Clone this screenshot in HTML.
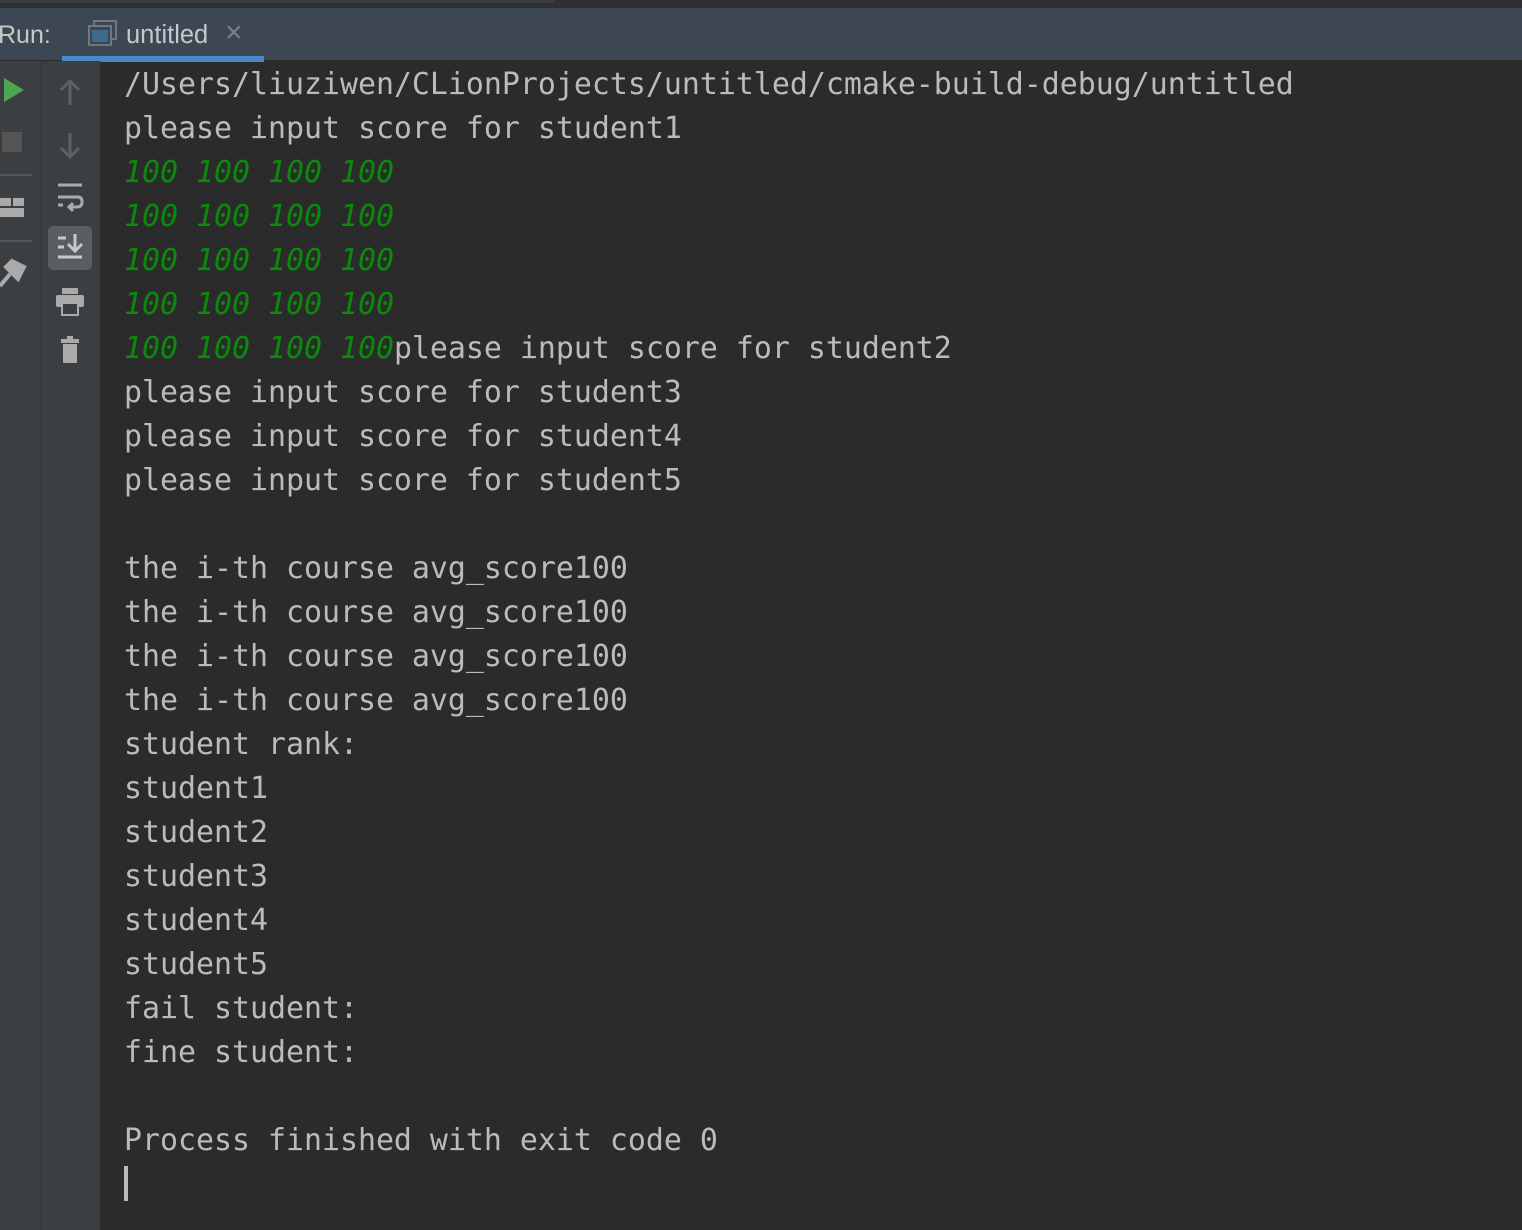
<!DOCTYPE html>
<html><head><style>
body{margin:0;width:1522px;height:1230px;overflow:hidden;background:#2b2b2b;position:relative;font-family:"Liberation Sans",sans-serif}
.top{position:absolute;left:0;top:0;width:1522px;height:8px;background:#2f3032}
.top i{position:absolute;left:0;top:0;width:555px;height:3px;background:#3c3f41}
.tabs{position:absolute;left:0;top:8px;width:1522px;height:52px;background:#3d4754;border-bottom:1px solid #2b2b2b}
.run{position:absolute;left:-2px;top:13px;color:#c8c8c8;font-size:25px}
.tab{position:absolute;left:126px;top:13px;color:#c8c8c8;font-size:25.5px}
.x{position:absolute;left:225px;top:10px;color:#7a8088;font-size:30px;line-height:30px}
.ul{position:absolute;left:62px;top:48px;width:202px;height:6px;background:#4a88c7}
.tb1{position:absolute;left:0;top:61px;width:41px;height:1169px;background:#3c3f41;border-right:1px solid #323232}
.tb2{position:absolute;left:42px;top:61px;width:58px;height:1169px;background:#3c3f41}
.out{position:absolute;left:124px;top:63px;font-family:"DejaVu Sans Mono","Liberation Mono",monospace;font-size:29.9px;line-height:44px;color:#bbbbbb;white-space:pre;margin:0}
.g{color:#0a8a0a;font-style:italic}
.cur{position:absolute;left:124px;top:1166px;width:4px;height:35px;background:#bbbbbb}
</style></head><body>
<div class="top"><i></i></div>
<div class="tabs">
<div class="run">Run:</div>
<svg style="position:absolute;left:88px;top:12px" width="30" height="28"><rect x="6" y="1" width="22" height="18" fill="none" stroke="#6e7782" stroke-width="2"/><rect x="1" y="6" width="22" height="19" fill="#3d4754" stroke="#6e7782" stroke-width="2"/><rect x="4" y="10" width="16" height="12" fill="#3f6b8c"/></svg>
<div class="tab">untitled</div>
<div class="x">×</div>
<div class="ul"></div>
</div>
<div class="tb1">
<svg width="41" height="400" style="position:absolute;left:0;top:0">
<polygon points="4,17 24,29 4,41" fill="#4ea74e"/>
<rect x="2" y="71" width="20" height="20" fill="#555"/>
<rect x="0" y="113" width="32" height="2" fill="#555"/>
<rect x="0" y="137" width="11" height="8" fill="#aaa"/><rect x="13" y="137" width="11" height="8" fill="#aaa"/><rect x="0" y="147" width="24" height="9" fill="#aaa"/>
<rect x="0" y="179" width="32" height="2" fill="#555"/>
<path d="M0,225 L10,213 M6,206 L18,218 L24,206 L12,200 Z" stroke="#aaa" stroke-width="4" fill="#aaa"/>
</svg></div>
<div class="tb2">
<svg width="58" height="400" style="position:absolute;left:0;top:0">
<path d="M28,44 V20 M19,29 L28,20 L37,29" stroke="#5e6062" stroke-width="3" fill="none"/>
<path d="M28,72 V96 M19,87 L28,96 L37,87" stroke="#5e6062" stroke-width="3" fill="none"/>
<path d="M16,124 H40 M16,136 H36 Q40,136 40,141 Q40,146 35,146 H28 M31,142 L27,146 L31,150 M16,144 H21" stroke="#aaa" stroke-width="3" fill="none"/>
<rect x="6" y="165" width="44" height="44" rx="5" fill="#5a5e61"/>
<path d="M16,177 H24 M16,186 H22 M16,196 H40 M33,173 V190 M26,183 L33,190 L40,183" stroke="#c8c8c8" stroke-width="3" fill="none"/>
<rect x="20" y="227" width="16" height="6" fill="#aaa"/><rect x="14" y="234" width="28" height="12" rx="2" fill="#aaa"/><rect x="20" y="242" width="16" height="12" fill="#3c3f41" stroke="#aaa" stroke-width="2"/>
<rect x="19" y="278" width="18" height="4" fill="#aaa"/><rect x="21" y="283" width="14" height="19" fill="#aaa"/><rect x="25" y="275" width="6" height="3" fill="#aaa"/>
</svg></div>
<pre class="out">/Users/liuziwen/CLionProjects/untitled/cmake-build-debug/untitled
please input score for student1
<span class="g">100 100 100 100</span>
<span class="g">100 100 100 100</span>
<span class="g">100 100 100 100</span>
<span class="g">100 100 100 100</span>
<span class="g">100 100 100 100</span>please input score for student2
please input score for student3
please input score for student4
please input score for student5

the i-th course avg_score100
the i-th course avg_score100
the i-th course avg_score100
the i-th course avg_score100
student rank:
student1
student2
student3
student4
student5
fail student:
fine student:

Process finished with exit code 0</pre>
<div class="cur"></div>
</body></html>
